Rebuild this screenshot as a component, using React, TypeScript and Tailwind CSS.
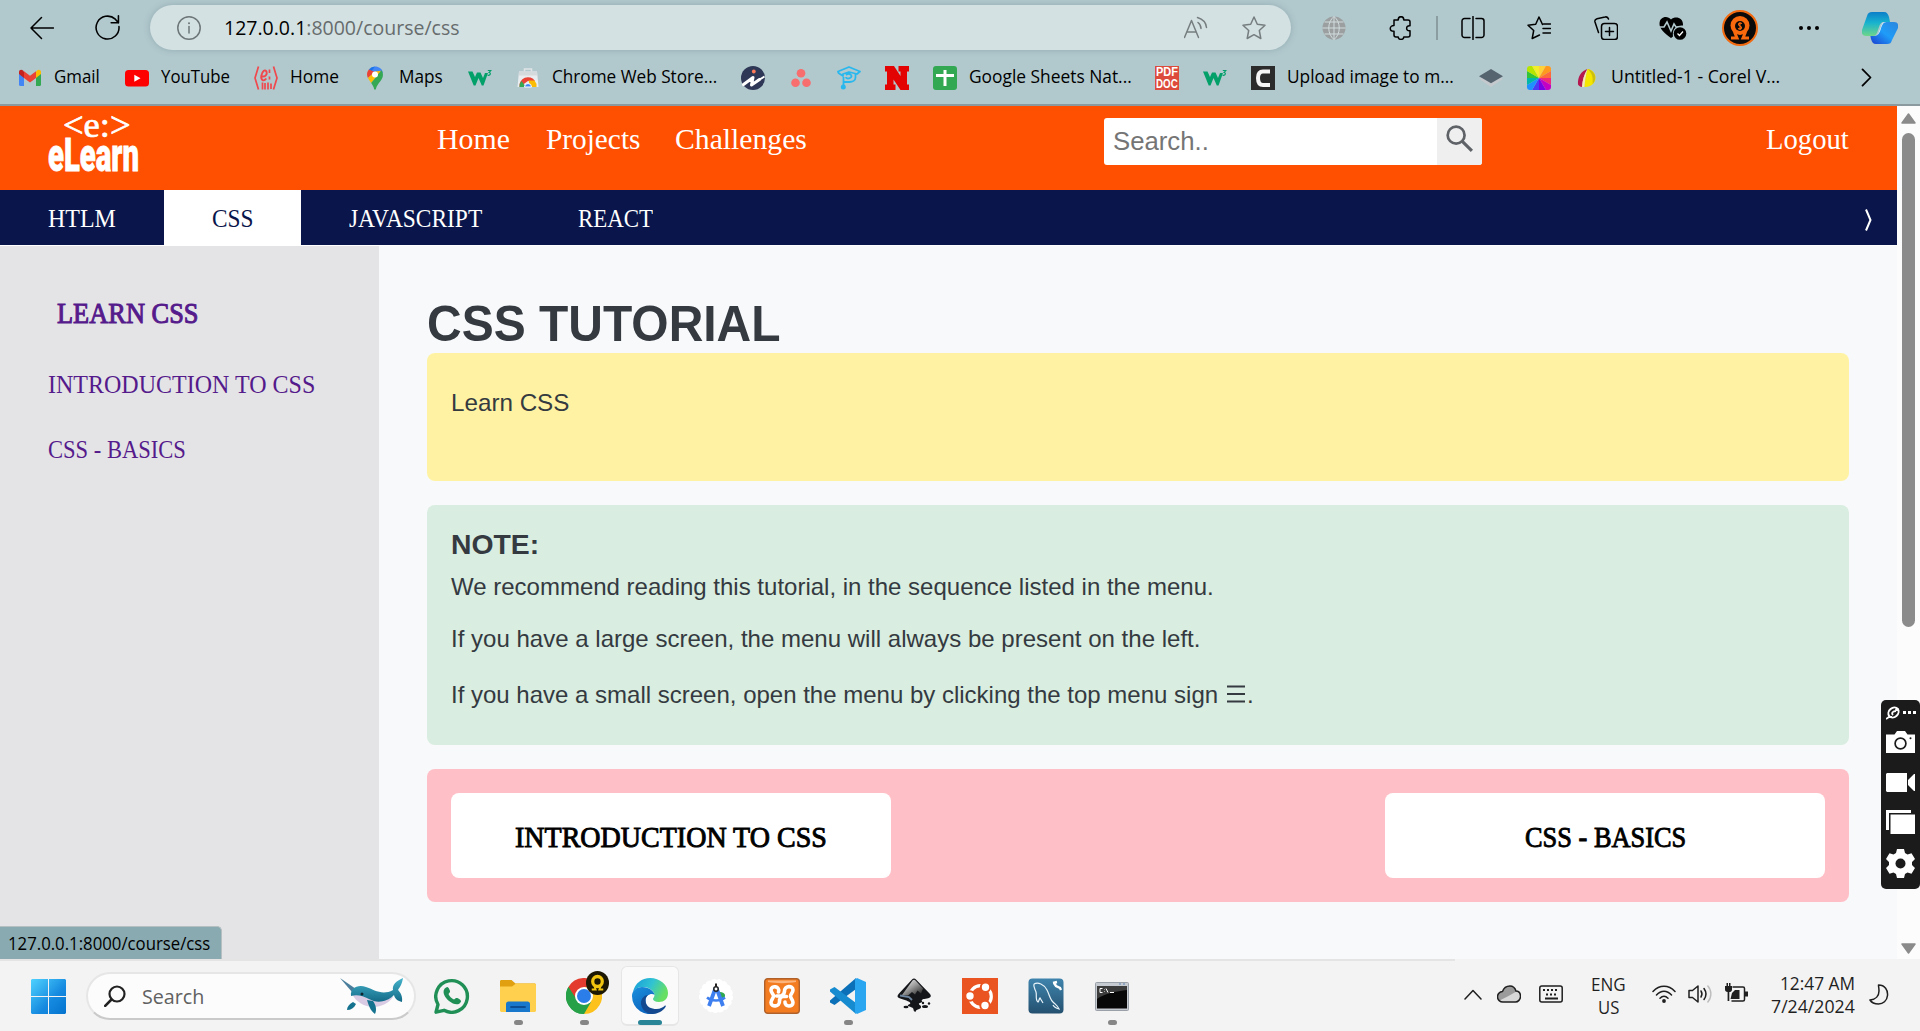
import React, { useLayoutEffect, useRef, type ReactNode } from "react";

/** Single line of text that is condensed or widened to occupy exactly `w` pixels. */
function Fit({ w, className = "", children }: { w: number; className?: string; children: ReactNode }) {
  const ref = useRef<HTMLSpanElement>(null);
  useLayoutEffect(() => {
    const el = ref.current;
    if (!el) return;
    el.style.transform = `scaleX(${w / el.offsetWidth})`;
  }, [w]);
  return (
    <span className={`block shrink-0 ${className}`} style={{ width: w }}>
      <span ref={ref} className="inline-block origin-left whitespace-nowrap">
        {children}
      </span>
    </span>
  );
}

type IconProps = { className?: string; children: ReactNode; box?: string };
function Svg({ className = "size-6", children, box = "0 0 24 24" }: IconProps) {
  return (
    <svg viewBox={box} preserveAspectRatio="none" className={`block shrink-0 ${className}`} fill="none">
      {children}
    </svg>
  );
}
const line = { stroke: "currentColor", strokeWidth: 1.5, strokeLinecap: "round", strokeLinejoin: "round" } as const;

/* ---------- Bookmark icons ---------- */
const Gmail = () => (
  <Svg>
    <path d="M1 6v12.500a1.500 1.500 0 0 0 1.500 1.500H6V9.500z" fill="#4285f4" />
    <path d="M18 9.500V20h3.500a1.500 1.500 0 0 0 1.500-1.500V6z" fill="#34a853" />
    <path d="M18 5.500V12l5-4V6c0-2-2.500-3-4-1.500z" fill="#fbbc04" />
    <path d="M6 5.500V12L1 8V6c0-2 2.500-3 4-1.500z" fill="#c5221f" />
    <path d="M6 12V5.200l6 4.600 6-4.600V12l-6 4.600z" fill="#ea4335" />
  </Svg>
);
const YouTube = () => (
  <Svg>
    <rect x="0" y="4" width="24" height="16.500" rx="3.500" fill="#f00" />
    <path d="M9.300 8.800v7l6.200-3.500z" fill="#fff" />
  </Svg>
);
const ELearnMark = () => (
  <Svg className="size-6 text-[#f0484c]">
    <path d="M4.500.5 1 12l3.500 11.500M19.500.5 23 12l-3.500 11.500" stroke="currentColor" strokeWidth="1.700" />
    <path d="M7.500 10.500c4 .5 6-2 5-5-1.500-2.500-4.500-.5-5.200 4.500-.6 4 2.200 6 5 2.500" stroke="currentColor" strokeWidth="1.900" />
    <path d="M8.500 16.500v7M11 17v6.500M15.500 3.500v3.500M15.500 10.500v3M14 16.500v7M17 17.500v5.500" stroke="currentColor" strokeWidth="1.700" />
  </Svg>
);
const Maps = () => (
  <Svg>
    <path d="M12 .5a8 8 0 0 0-6.200 2.900L12 8.500z" fill="#1a73e8" />
    <path d="M12 .5c4 0 7.200 2.300 7.900 6.200L12 12 8 6z" fill="#4285f4" />
    <path d="M5.800 3.400A8.500 8.500 0 0 0 4.900 12L12 6z" fill="#ea4335" />
    <path d="M5 12c.8 1.900 2 3.300 3.200 5L18.300 4.700 12 5.500z" fill="#fbbc04" />
    <path d="M18.500 4.300c2.500 4 1.500 7.500-1 10.700-2.300 3-3.900 4.700-4.600 8-.3 1-1.500 1-1.800 0-.5-2.300-1.500-4-2.900-6z" fill="#34a853" />
    <circle cx="12" cy="8.600" r="3" fill="#fff" />
  </Svg>
);
const W3 = () => (
  <Svg className="size-6 text-[#04a06a]">
    <path d="M0 5.500h4.500L7 11l2-4.500h3.500L15 12l2-5h3l-4.500 12.500h-1.700L10.500 12 7.500 19.500H5.700z" fill="currentColor" />
    <path d="M19.800 4.500h3l-1.600 2c1.600 0 1.800 3.300-1.600 2.800" stroke="currentColor" strokeWidth="1.200" />
  </Svg>
);
const WebStore = () => (
  <Svg>
    <path d="M8.500 5.500V3h7v2.500" stroke="#dfe3e6" strokeWidth="1.600" />
    <path d="M3 5.500h18L22.500 21h-21z" fill="#e9edef" />
    <path d="M3 5.500h18l.4 4H2.600z" fill="#d5dadd" />
    <path d="M3.500 21a8.500 8.500 0 0 1 15.500-6H12z" fill="#ea4335" />
    <path d="M3.500 21a8 8 0 0 1 2-6l4.500 6z" fill="#34a853" />
    <path d="M20.500 21a8 8 0 0 0-2-6.500h-6l1.700 6.500z" fill="#fbbc04" />
    <path d="M8.500 21a3.500 3.500 0 0 1 7 0z" fill="#4285f4" stroke="#fff" strokeWidth="1" />
  </Svg>
);
const InfinityI = () => (
  <Svg>
    <circle cx="12" cy="12" r="12" fill="#2e3856" />
    <path d="m2.500 18.500 9.500-7-1.500 7.500 8-5.500" stroke="#fff" strokeWidth="3" strokeLinejoin="round" strokeLinecap="round" />
    <path d="m17 14.500 6.500-4" stroke="#fff" strokeWidth="2" />
    <circle cx="12.800" cy="5.500" r="1.900" fill="#ff7a59" />
  </Svg>
);
const Asana = () => (
  <Svg className="size-6 text-[#f86d6d]">
    <circle cx="12" cy="7.200" r="4.300" fill="currentColor" />
    <circle cx="6.500" cy="16.800" r="4.300" fill="currentColor" />
    <circle cx="17.500" cy="16.800" r="4.300" fill="currentColor" />
  </Svg>
);
const GraduateP = () => (
  <Svg className="size-6 text-[#29b8ee]">
    <path d="M1 5.500 12 1l11 4.500-3 2.500-8-2-6 2v2L1.500 7zM6.500 22V11M7 16h5.500c3 0 6-1.500 6-4.500V8M9 9c3-3 8 1 4 3-2 1-4 .5-4-1" stroke="currentColor" strokeWidth="1.800" strokeLinejoin="round" />
    <circle cx="6.300" cy="21" r="2.500" fill="currentColor" />
  </Svg>
);
const BigN = () => (
  <Svg>
    <path d="M0 0h9l6.500 10V5.500h-2V0H24v5.500h-2v13h2V24h-8.500L8.500 13.500v5h2V24H0v-5.500h2v-13H0z" fill="#e40303" />
  </Svg>
);
const Sheets = () => (
  <Svg>
    <rect width="24" height="24" rx="3" fill="#32a852" />
    <path d="M12 4v16M3 9.500h18" stroke="#fff" strokeWidth="3" />
  </Svg>
);
const PdfDoc = () => (
  <span className="flex size-6 flex-col items-center justify-center bg-[#dd4b3c] font-['Liberation_Sans'] text-[12px] leading-[12px] font-bold text-white">
    <Fit w={22}>PDF</Fit>
    <Fit w={22}>DOC</Fit>
  </span>
);
const BigC = () => (
  <Svg>
    <rect width="24" height="24" fill="#2b2b2b" />
    <path d="M19 5.500h-7c-3.500 0-5 2-5 6.500s1.500 7 5 7h7" stroke="#f5f5f5" strokeWidth="4" />
  </Svg>
);
const Layers = () => (
  <Svg>
    <path d="m12 7 12 6-12 8-12-8z" fill="#c3c9cc" />
    <path d="m12 3 12 7.200-12 7-12-7z" fill="#566470" />
  </Svg>
);
const WHEEL = ["#ffd23a", "#ff9a1f", "#ff6a3a", "#ef2a7a", "#c400c4", "#7a00e6", "#4a3cf5", "#1e90ff", "#00b7a8", "#35c435", "#b6e600", "#f3ee2c"];
const ColorWheel = () => (
  <span className="block size-6 overflow-hidden rounded-[3px]">
    <Svg>
      {WHEEL.map((c, i) => {
        const a = ((i * 30 - 90) * Math.PI) / 180;
        const b = (((i + 1) * 30 - 90) * Math.PI) / 180;
        return <path key={c} fill={c} d={`M12 12L${12 + 24 * Math.cos(a)} ${12 + 24 * Math.sin(a)}L${12 + 24 * Math.cos(b)} ${12 + 24 * Math.sin(b)}z`} />;
      })}
    </Svg>
  </span>
);
const Corel = () => (
  <Svg>
    <path d="M12.500 3C6 5 2.500 11 3 18.500 4 20 5.500 21 7 21c.5-7 2-12.500 5.500-18z" fill="#b5174f" />
    <path d="M12.500 3C9 8.500 7.500 14 7 21h2.500c.5-7 1.500-12 3-18z" fill="#f7e9b0" />
    <path d="M12.500 3c-1.500 6-2.500 11-3 18 6 .5 10.500-3.500 11-8.500C21 8 17.500 3.500 12.500 3z" fill="#f5e600" />
    <path d="M12.500 3c4 3 6 8 5 15 4.500-4 4-13-5-15z" fill="#cdbf10" />
  </Svg>
);

type Bookmark = { icon: ReactNode; label?: string; w?: number; slot: string };
const bookmarks: Bookmark[] = [
  { icon: <Gmail />, label: "Gmail", w: 46, slot: "w-[107px]" },
  { icon: <YouTube />, label: "YouTube", w: 69, slot: "w-[129px]" },
  { icon: <ELearnMark />, label: "Home", w: 49, slot: "w-[109px]" },
  { icon: <Maps />, label: "Maps", w: 44, slot: "w-[105px]" },
  { icon: <W3 />, slot: "w-[48px]" },
  { icon: <WebStore />, label: "Chrome Web Store...", w: 165, slot: "w-[225px]" },
  { icon: <InfinityI />, slot: "w-[48px]" },
  { icon: <Asana />, slot: "w-[48px]" },
  { icon: <GraduateP />, slot: "w-[48px]" },
  { icon: <BigN />, slot: "w-[48px]" },
  { icon: <Sheets />, label: "Google Sheets Nat...", w: 163, slot: "w-[222px]" },
  { icon: <PdfDoc />, slot: "w-[48px]" },
  { icon: <W3 />, slot: "w-[48px]" },
  { icon: <BigC />, label: "Upload image to m...", w: 167, slot: "w-[228px]" },
  { icon: <Layers />, slot: "w-[48px]" },
  { icon: <ColorWheel />, slot: "w-[48px]" },
  { icon: <Corel />, label: "Untitled-1 - Corel V...", w: 169, slot: "w-[286px]" },
];

/* ---------- Browser chrome ---------- */
function BrowserBar() {
  return (
    <header className="h-[106px] shrink-0 border-b-2 border-[#8a9a9f] bg-[#b1c8cd] font-['Open_Sans','Noto_Sans',sans-serif] text-black">
      <div className="flex h-[55px] items-center pl-[30px]">
        <div className="w-[65px]">
          <Svg>
            <path d="M23.500 12H1M11.500 1.500 1 12l10.500 10.500" {...line} />
          </Svg>
        </div>
        <div className="w-[55px]">
          <Svg className="size-[25px]">
            <path d="M23 11a11 11 0 1 1-3.500-7L22.500 7.500M22.500.8v6.700H15.500" {...line} strokeWidth={1.500} />
          </Svg>
        </div>
        <div className="flex h-[45px] w-[1141px] items-center rounded-full bg-[#d3e1e2] pr-[25px] pl-[27px] shadow-[0_0_6px_rgba(90,120,125,0.35)]">
          <Svg className="size-6 text-[#6d7678]">
            <circle cx="12" cy="12" r="11.200" {...line} />
            <path d="M12 10.500V17" {...line} />
            <circle cx="12" cy="7.200" r="1" fill="currentColor" />
          </Svg>
          <div className="ml-[23px] text-[20px] leading-6">
            <Fit w={236}>
              127.0.0.1<span className="text-[#676c6d]">:8000/course/css</span>
            </Fit>
          </div>
          <div className="ml-auto flex items-center gap-[34px] text-[#767d7f]">
            <Svg>
              <path d="m.5 21.500 7-17 7 17M3 16h9M14 6.500c2 1.500 3 3.500 3 6M13.500 1.500c5 1.500 8.500 5 9 10" {...line} />
            </Svg>
            <Svg>
              <path d="m12 1 3.300 7.200 7.700 1-5.700 5.300 1.500 8L12 18.700 5.200 22.500l1.500-8L1 9.200l7.700-1z" {...line} />
            </Svg>
          </div>
        </div>
        <div className="ml-[31px] w-[67px]">
          <Svg>
            <circle cx="12" cy="12" r="11.500" fill="#9b9fa0" />
            <path d="M12 .5v23M.5 12h23M2.500 6h19M2.500 18h19M12 .5C5 6 5 18 12 23.500M12 .5c7 5.500 7 17.500 0 23" stroke="#d2dcde" strokeWidth="1" />
          </Svg>
        </div>
        <div className="w-[47px]">
          <Svg>
            <path d="M5 4h4.200C9.200-.5 14.800-.5 14.800 4H19a2 2 0 0 1 2 2v3.800c-4.500-.8-4.500 5.800 0 5V19a2 2 0 0 1-2 2h-4.200c0 3.200-5.600 3.200-5.600 0H7a2 2 0 0 1-2-2v-3.800c-5 0-5-5.600 0-5.600z" {...line} />
          </Svg>
        </div>
        <div className="h-6 w-[25px] border-l-2 border-[#8b9da1]" />
        <div className="w-[66px]">
          <Svg>
            <path d="M9 2.500H3.500a2.500 2.500 0 0 0-2.500 2.500v14a2.500 2.500 0 0 0 2.500 2.500H9M15 2.500h5.500A2.500 2.500 0 0 1 23 5v14a2.500 2.500 0 0 1-2.500 2.500H15M12 .5v23" {...line} />
          </Svg>
        </div>
        <div className="w-[67px]">
          <Svg>
            <path d="M15.500 8.500 12 1 8.700 8.200 1 9.200l5.700 5.300-1.500 8L12.500 19M16 12.500h7.500M16.500 8h7M16 17h7.500" {...line} />
          </Svg>
        </div>
        <div className="w-[65px]">
          <Svg>
            <rect x="7.500" y="7.500" width="16" height="16" rx="3" {...line} />
            <path d="M15.500 11.500v8M11.500 15.500h8M4.500 16.500 1 6c-.5-1.700.3-2.800 2-3.300L11 1c2-.5 3 .3 3.500 2" {...line} />
          </Svg>
        </div>
        <div className="w-[63px]">
          <Svg className="h-6 w-[28px]" box="0 0 28 24">
            <path d="M12 3.500C9-.5.500 0 .5 8c0 5 5 9 11.500 14l2-1.500C13 13 17 9 24 9.500 24.500 1 16 0 12 3.500z" fill="#000" />
            <path d="M0 11h5l3-5 4 9 3-7 2 3h6" stroke="#b1c8cd" strokeWidth="1.600" />
            <circle cx="21" cy="17.500" r="6.300" fill="#000" />
            <path d="m18.500 17.500 2 2 3.500-4" stroke="#fff" strokeWidth="1.300" />
          </Svg>
        </div>
        <div className="w-[77px]">
          <Svg className="size-9" box="0 0 36 36">
            <circle cx="18" cy="18" r="17" fill="#0a0a0a" stroke="#f26a10" strokeWidth="2" />
            <circle cx="18" cy="15.500" r="9.500" fill="#f8690d" />
            <path d="M9 28h6l-2.500-6M27 28h-6l2.500-6" stroke="#f8690d" strokeWidth="3" />
            <circle cx="18" cy="16" r="5" fill="#0a0a0a" />
            <path d="M20 13.500c-3-1.500-5 1-2 2.500s1 4-2 2.500M18 12v8" stroke="#f8690d" strokeWidth="1.100" />
          </Svg>
        </div>
        <div className="flex w-[61px] gap-[4px]">
          <i className="size-[4px] rounded-full bg-black" />
          <i className="size-[4px] rounded-full bg-black" />
          <i className="size-[4px] rounded-full bg-black" />
        </div>
        <Svg className="ml-[2px] h-[34px] w-9" box="0 0 36 34">
          <defs>
            <linearGradient id="cpA" x1="0" y1="0" x2="0" y2="1">
              <stop offset="0" stopColor="#0c7fc9" />
              <stop offset=".45" stopColor="#18b3cf" />
              <stop offset="1" stopColor="#6fd58a" />
            </linearGradient>
            <linearGradient id="cpB" x1="1" y1="0" x2="0" y2="1">
              <stop offset="0" stopColor="#2b86dd" />
              <stop offset=".5" stopColor="#1f9cf8" />
              <stop offset="1" stopColor="#1b3fd0" />
            </linearGradient>
          </defs>
          <path d="M10 1h12c3 0 4 2 5 5l1 5h-6c-3 0-4 2-5 5l-2 6c-1 2-2 3-4 3H4c-3 0-5-2-4-6L5 5c1-3 2-4 5-4z" fill="url(#cpA)" />
          <path d="M25 33H14c-3 0-4-2-5-5l-.6-3H12c3 0 4-2 5-5l2-5c1-3 2-4 5-4h8c3 0 5 2 4 6l-6 12c-1 3-2 4-5 4z" fill="url(#cpB)" />
          <path d="M10.500 25h1.500c3 0 4-2 5-5l2-5c.8-2.500 1.800-4 4-4h1.500c-4 0-5 5-6 8s-3 6-6 6z" fill="#dfeef2" />
        </Svg>
      </div>
      <nav className="flex h-[45px] items-center pl-[18px] text-[18px] leading-6">
        {bookmarks.map((b, i) => (
          <div key={i} className={`flex shrink-0 items-center gap-3 ${b.slot}`}>
            {b.icon}
            {b.label && <Fit w={b.w ?? 60} className="-mt-[3px]">{b.label}</Fit>}
          </div>
        ))}
        <Svg className="h-[19px] w-[11px]" box="0 0 11 20">
          <path d="m1.500 1.500 8 8.500-8 8.500" {...line} strokeWidth={1.800} />
        </Svg>
      </nav>
    </header>
  );
}

/* ---------- Site ---------- */
const serif = "font-['Liberation_Serif',serif]";

function SiteHeader() {
  return (
    <div className={`flex h-[84px] shrink-0 bg-[#ff4f00] text-white ${serif}`}>
      <div className="w-[437px] pt-[8px] pl-12">
        <div className="pl-[15px] text-[36px] leading-[23px]">
          <Fit w={68} className="[-webkit-text-stroke:0.7px]">&lt;e:&gt;</Fit>
        </div>
        <div className="font-['Roboto','Liberation_Sans',sans-serif] text-[46px] leading-[36px] font-black [-webkit-text-stroke:0.8px]">
          <Fit w={91}>eLearn</Fit>
        </div>
      </div>
      <div className="flex pt-[15px] text-[29px] leading-[36px]">
        <div className="w-[109px]"><Fit w={73}>Home</Fit></div>
        <div className="w-[129px]"><Fit w={94}>Projects</Fit></div>
        <div className="w-[429px]"><Fit w={132}>Challenges</Fit></div>
      </div>
      <div className="mt-3 flex h-[47px] w-[378px] overflow-hidden rounded-[3px] bg-white font-['Liberation_Sans',sans-serif]">
        <div className="flex w-[333px] items-center pb-px pl-[9px] text-[26px] leading-8 text-[#757575]">
          <Fit w={96}>Search..</Fit>
        </div>
        <div className="flex-1 bg-[#efefef] pt-[7px] pl-[9px]">
          <Svg className="size-[27px] text-[#5f6368]">
            <circle cx="9" cy="9" r="7.500" stroke="currentColor" strokeWidth="2.400" />
            <path d="m14.500 14.500 8.500 8.500" stroke="currentColor" strokeWidth="2.800" />
          </Svg>
        </div>
      </div>
      <div className="ml-auto pt-[15px] pr-12 text-[29px] leading-[36px]">
        <Fit w={83}>Logout</Fit>
      </div>
    </div>
  );
}

function CourseTabs() {
  return (
    <div className={`flex h-[56px] shrink-0 border-b border-white bg-[#0a164b] text-[25px] leading-[30px] text-white ${serif}`}>
      <div className="w-[164px] pt-[14px] pl-12"><Fit w={68}>HTLM</Fit></div>
      <div className="w-[137px] bg-white pt-[14px] pl-12 text-[#0a164b]"><Fit w={41}>CSS</Fit></div>
      <div className="w-[229px] pt-[14px] pl-12"><Fit w={133}>JAVASCRIPT</Fit></div>
      <div className="w-[170px] pt-[14px] pl-12"><Fit w={75}>REACT</Fit></div>
      <Svg className="mt-[19px] mr-[25px] ml-auto h-[22px] w-[7px]" box="0 0 7 22">
        <path d="m1 .5 4.500 10.500L1 21.500" stroke="currentColor" strokeWidth="2" />
      </Svg>
    </div>
  );
}

function Sidebar() {
  return (
    <aside className={`w-[379px] shrink-0 bg-[#e4e4e6] pl-12 text-[25px] leading-[30px] text-[#551a8b] ${serif}`}>
      <div className="pt-[49px] pl-[9px] text-[29px] leading-[36px] [-webkit-text-stroke:1px]">
        <Fit w={142}>LEARN CSS</Fit>
      </div>
      <div className="pt-[39px]"><Fit w={267}>INTRODUCTION TO CSS</Fit></div>
      <div className="pt-[35px]"><Fit w={138}>CSS - BASICS</Fit></div>
    </aside>
  );
}

function NextButton({ children }: { children: ReactNode }) {
  return (
    <div className="flex h-[85px] w-[440px] justify-center rounded-lg bg-white pt-[26px] text-[29px] leading-[36px] text-black [-webkit-text-stroke:0.9px]">
      {children}
    </div>
  );
}

function Lesson() {
  return (
    <main className="flex-1 bg-[#f8f9fb] px-12 font-['Liberation_Sans',sans-serif] text-[24px] leading-[30px] text-[#343a40]">
      <h1 className="pt-[50px] text-[50px] leading-[57px] font-bold"><Fit w={354}>CSS TUTORIAL</Fit></h1>
      <section className="h-[128px] rounded-lg bg-[#fff3a3] pt-[35px] pl-6">
        <Fit w={118}>Learn CSS</Fit>
      </section>
      <section className="mt-6 h-[240px] rounded-lg bg-[#d9ede0] pt-[23px] pl-6">
        <h2 className="text-[28px] leading-[34px] font-bold"><Fit w={88}>NOTE:</Fit></h2>
        <p className="pt-[10px]"><Fit w={763}>We recommend reading this tutorial, in the sequence listed in the menu.</Fit></p>
        <p className="pt-[22px]"><Fit w={749}>If you have a large screen, the menu will always be present on the left.</Fit></p>
        <p className="flex pt-[26px]">
          <Fit w={767}>If you have a small screen, open the menu by clicking the top menu sign</Fit>
          <Svg className="mt-[5px] ml-[9px] h-[18px] w-[18px]" box="0 0 18 18">
            <path d="M0 1.500h18M0 9h18M0 16.500h18" stroke="currentColor" strokeWidth="2" />
          </Svg>
          <span className="ml-[2px]">.</span>
        </p>
      </section>
      <section className={`mt-6 flex h-[133px] justify-between rounded-lg bg-[#ffbfc7] p-6 ${serif}`}>
        <NextButton><Fit w={312}>INTRODUCTION TO CSS</Fit></NextButton>
        <NextButton><Fit w={161}>CSS - BASICS</Fit></NextButton>
      </section>
    </main>
  );
}

function Scrollbar() {
  return (
    <div className="flex w-[23px] shrink-0 flex-col items-center bg-[#fcfcfc] pt-[7px] pb-[5px]">
      <Svg className="h-[11px] w-[15px]" box="0 0 15 11"><path d="M7.500 1 14 10H1z" fill="#8b8b8b" stroke="#8b8b8b" strokeWidth="1.500" strokeLinejoin="round" /></Svg>
      <div className="mt-[9px] h-[494px] w-[13px] rounded-full bg-[#8b8b8b]" />
      <Svg className="mt-auto h-[11px] w-[15px]" box="0 0 15 11"><path d="M7.500 10 14 1H1z" fill="#8b8b8b" stroke="#8b8b8b" strokeWidth="1.500" strokeLinejoin="round" /></Svg>
    </div>
  );
}

function Recorder() {
  return (
    <div className="absolute top-[700px] right-0 flex h-[189px] w-[39px] flex-col items-center rounded-[5px] bg-[#1b1b1b] text-white">
      <div className="mt-[5px] flex h-[15px] items-center gap-[3px]">
        <Svg className="size-[14px]" box="0 0 14 14">
          <ellipse cx="7.500" cy="6.500" rx="5.500" ry="4.500" transform="rotate(-40 7.500 6.500)" stroke="#fff" strokeWidth="2" />
          <path d="M10 5c-3 0-5 2-3 4M0 13l3-2h3" stroke="#fff" strokeWidth="1.800" />
          <circle cx="11" cy="3.500" r="1.800" fill="#fff" />
        </Svg>
        <i className="-mr-px size-[3px] bg-white" />
        <i className="-mr-px size-[3px] bg-white" />
        <i className="size-[3px] bg-white" />
      </div>
      <Svg className="mt-[11px] h-[22px] w-[29px]" box="0 0 29 22">
        <path d="M0 3.500h8.500L11 0h8l2.500 3.500H29V22H0z" fill="#fff" />
        <circle cx="14.500" cy="12.500" r="5.400" stroke="#1b1b1b" strokeWidth="1.700" />
        <circle cx="24.500" cy="7.300" r="1" fill="#1b1b1b" />
      </Svg>
      <Svg className="mt-[20px] h-[19px] w-[29px]" box="0 0 29 19">
        <path d="M1 0h20v19H1l-1-1V1zM22 7l6-6h1v17h-1l-6-6z" fill="#fff" />
      </Svg>
      <Svg className="mt-[18px] h-[24px] w-[29px]" box="0 0 29 24">
        <path d="M0 0h25v3H3v17H0z" fill="#fff" />
        <path d="M4.500 4.500H29V24H4.500z" fill="#fff" />
      </Svg>
      <Svg className="mt-[15px] size-[29px]" box="0 0 29 29">
        <path d="M11 0h7l1 4 2.500 1.500 4-1.300L29 10l-3 3v3l3 3-3.500 5.800-4-1.300L19 25l-1 4h-7l-1-4-2.500-1.500-4 1.300L0 19l3-3v-3l-3-3 3.500-5.800 4 1.300L10 4z" fill="#fff" />
        <circle cx="14.500" cy="14.500" r="5" fill="#1b1b1b" />
      </Svg>
    </div>
  );
}

/* ---------- Taskbar icons ---------- */
const Windows = () => (
  <Svg className="size-[35px]" box="0 0 35 35">
    <defs>
      <linearGradient id="win" gradientUnits="userSpaceOnUse" x1="0" y1="0" x2="35" y2="35">
        <stop offset="0" stopColor="#4fd2ff" /><stop offset=".6" stopColor="#1589df" /><stop offset="1" stopColor="#0473cf" />
      </linearGradient>
    </defs>
    <path d="M1 0h16v17H0V1zM18 0h16l1 1v16H18zM0 18h17v17H1l-1-1zM18 18h17v16l-1 1H18z" fill="url(#win)" />
  </Svg>
);
const Narwhal = () => (
  <Svg className="h-[36px] w-[64px]" box="0 0 64 36">
    <defs>
      <linearGradient id="nar" x1="0" y1="0" x2="0" y2="1"><stop offset="0" stopColor="#46b3cb" /><stop offset="1" stopColor="#136a87" /></linearGradient>
    </defs>
    <path d="m0 0 16 11-4 3z" fill="#4a7e9c" />
    <path d="M12 16c5 10 17 15 28 12 6-1.500 10-5 13-9L30 17z" fill="#d9cbe4" />
    <path d="M11 18c-1-8 7-12 15-9 8 2.500 16 9 27 3-1-5 3-9 10-12-1 6-3 9-5 12 2 2 5 6 4 12-4-1-7-3-8-7-8 8-18 8-25 4-6-3-12-5-18-3z" fill="url(#nar)" />
    <path d="M13 24c-4 2-6 5-6 8 4 0 7-2 9-6zM27 22c2 6 3 10 8 14 2-4 1-9-2-13z" fill="#16738f" />
    <circle cx="22" cy="16" r="1.500" fill="#10242e" />
  </Svg>
);
const WhatsApp = () => (
  <Svg className="size-9" box="0 0 36 36">
    <path d="M2 34.200 4 26.500A15.800 15.800 0 1 1 10 32.300z" stroke="#1f8f56" strokeWidth="3.400" strokeLinejoin="round" />
    <path d="M12 9.500c-5 3-1.500 10 3 13.500s10 5 12 .5c.5-1.500-3.500-4-5-3.500L20 21.500c-2.500-1-4.500-3-5.500-5.500l1.500-2c.5-1-1.500-5-2.500-5z" fill="#1f8f56" />
  </Svg>
);
const Folder = () => (
  <Svg className="size-9" box="0 0 36 36">
    <path d="M0 3.500C0 2.500.500 2 1.500 2h10l4 3.500H35l1 1V12H0z" fill="#e0a010" />
    <path d="M0 8.500h12l4-3h19l1 1V33l-1 1H1l-1-1z" fill="#ffd04d" />
    <path d="M6 34v-8c0-1.500 1-2.500 2.500-2.500h19c1.500 0 2.500 1 2.500 2.500v8z" fill="#1878cc" />
    <path d="M11 29h14" stroke="#0b4d93" strokeWidth="1.800" strokeLinecap="round" />
  </Svg>
);
const Chrome = () => (
  <div className="relative">
    <Svg className="size-9" box="0 0 36 36">
      <path d="M18 18 2.400 9A18 18 0 0 0 18 36l8-13z" fill="#26a148" />
      <path d="M18 18 18 36A18 18 0 0 0 33.600 9H18z" fill="#fcc21b" />
      <path d="M18 18 2.400 9a18 18 0 0 1 31.200 0H18z" fill="#e33b2e" />
      <path d="m2.400 9 8 13.500 5 2L18 9z" fill="#e33b2e" />
      <path d="M2.400 9A18 18 0 0 0 18 36l7-12-14-2z" fill="#26a148" />
      <circle cx="18" cy="18" r="9" fill="#fff" />
      <circle cx="18" cy="18" r="7" fill="#2b7de9" />
    </Svg>
    <Svg className="absolute -top-[7px] left-5 h-6 w-[23px]">
      <circle cx="12" cy="12" r="12" fill="#1c1803" />
      <circle cx="12" cy="10.500" r="5" stroke="#f1c40f" strokeWidth="3.400" />
      <path d="M6 18.500h4l-1-3M18 18.500h-4l1-3" stroke="#f1c40f" strokeWidth="2" />
    </Svg>
  </div>
);
const Edge = () => (
  <Svg className="size-9" box="0 0 36 36">
    <defs>
      <linearGradient id="edA" x1="0" y1="0" x2="1" y2=".4"><stop offset="0" stopColor="#169bdb" /><stop offset=".55" stopColor="#31c3d2" /><stop offset="1" stopColor="#66df62" /></linearGradient>
      <linearGradient id="edB" x1="0" y1="0" x2=".6" y2="1"><stop offset="0" stopColor="#1a8fdc" /><stop offset="1" stopColor="#0b62bd" /></linearGradient>
    </defs>
    <path d="M1 14C3 5 10 0 18 0c10 0 18 7 18 15 0 6-4 9-9 9-4 0-6-1.500-6-3 0-1 1.500-2 1.500-4C22 12 16 9 11 9c-5 0-8 2-10 5z" fill="url(#edA)" />
    <path d="M0 18c0-5 4-9 10-9 7 0 12 4 12.500 8-2-2-9-1-9 6 0 6 5 11 12 11.500A18 18 0 0 1 0 18z" fill="url(#edB)" />
    <path d="M13.500 22c0 7 6 9 11 9 4 0 7-2 8.500-3.500 1 0 1 .5.500 1.500C31 33 26 36 20 36c-8-1-11-7-11-11 0-5 4-8 7-8-1.500 1.500-2.500 3-2.500 5z" fill="#14488f" />
  </Svg>
);
const AndroidStudio = () => (
  <Svg className="size-9" box="0 0 36 36">
    <circle cx="18" cy="18" r="16.300" fill="#fff" stroke="#fff" strokeWidth="1.500" strokeDasharray="4 2" />
    <path d="M22 14c5 0 6.500 4 3.500 6.500L22 19z" fill="#2fa84f" />
    <path d="M17.500 10 11 28M18.500 10 25 28" stroke="#3e7ff0" strokeWidth="3.800" />
    <path d="M9 19.500c5 4 13 4 18 0" stroke="#3e7ff0" strokeWidth="2.600" />
    <path d="M18 5.500V9" stroke="#222" strokeWidth="2" />
    <circle cx="18" cy="11" r="2.200" fill="#fff" stroke="#222" strokeWidth="1.500" />
  </Svg>
);
const Xampp = () => (
  <Svg className="size-9" box="0 0 36 36">
    <rect x=".7" y=".7" width="34.600" height="34.600" rx="3" fill="#f47c20" stroke="#b0612a" strokeWidth="1.400" />
    <path d="M4 2.500h28v1.500c-8 1.500-20 1.500-28 0z" fill="#fbb57c" />
    <path d="M14.500 14c2-6-7.500-7-7.500-2 0 3 2.500 3.500 2.500 6S7 21.500 7 24.500c0 5 9 4.500 8.500-1.500 0-3 2-4.500 3.500-4.500h3.500M12.500 18h4c1.500 0 3.500-1.500 4-4.500C20 7.500 29 7 29 12c0 3-2.500 3.500-2.500 6s2.500 3.500 2.500 6.500c0 5-8.500 4.500-8-.5" stroke="#fff" strokeWidth="3.600" strokeLinejoin="round" strokeLinecap="round" />
  </Svg>
);
const VsCode = () => (
  <Svg className="size-9" box="0 0 36 36">
    <path d="M26 0v11L4.500 27 0 24.500v-2z" fill="#0b70b8" />
    <path d="M26 36V25L4.500 9 0 11.500v2z" fill="#168bd0" />
    <path d="M27 0l9 4v28l-9 4-2-1.500V1.500z" fill="#2aa5f0" />
  </Svg>
);
const Inkscape = () => (
  <Svg className="size-9" box="0 0 36 36">
    <defs><linearGradient id="ink" x1="0" y1="0" x2=".9" y2="1"><stop offset="0" stopColor="#fff" /><stop offset=".5" stopColor="#9a9a9a" /><stop offset="1" stopColor="#222" /></linearGradient></defs>
    <path d="M16 1.500c1.200-1.300 2.800-1.300 4 0L34 16c2 2.500 0 4-3 4.500-4 .5-6 1-5 2.500s-2 1.500-3 2.500 3 2 2 4-5 1.500-5.500 4.500c-3-1-1-3.500-3.500-4.500s-5-1.500-4-2.500 3-1 2-2.500c-2-2-8-3-11-4.500-2-1-2-2.500 0-4.500z" fill="#14161a" />
    <path d="M16.500 2.500c1-.9 2-.9 3 0L27 10.500l-2 5-3.500-3-2.500 4-3-2.500-4 3.500-6-.5z" fill="url(#ink)" />
    <path d="m4 17.500 9 1.500 3 3" stroke="#6f86a0" strokeWidth="1.800" />
    <ellipse cx="10" cy="29" rx="2.500" ry="1.300" fill="#14161a" /><ellipse cx="29" cy="28.500" rx="3" ry="1.600" fill="#14161a" /><circle cx="33" cy="25.500" r="1.200" fill="#14161a" /><circle cx="27" cy="25" r="1.200" fill="#14161a" />
  </Svg>
);
const Ubuntu = () => (
  <Svg className="size-9" box="0 0 36 36">
    <rect width="36" height="36" fill="#e95420" />
    <circle cx="18.500" cy="18.500" r="10.800" stroke="#fff" strokeWidth="3.200" />
    <g fill="#fff" stroke="#e95420" strokeWidth="2"><circle cx="8" cy="18" r="4.700" /><circle cx="23.500" cy="9.300" r="4.700" /><circle cx="23" cy="27.500" r="4.700" /></g>
  </Svg>
);
const MySql = () => (
  <Svg className="size-9" box="0 0 36 36">
    <defs><linearGradient id="sql" x1="0" y1="0" x2="0" y2="1"><stop offset="0" stopColor="#3f84ad" /><stop offset="1" stopColor="#24506f" /></linearGradient></defs>
    <rect x=".5" y=".5" width="35" height="35" rx="4" fill="url(#sql)" />
    <path d="M6 6c4-2 10 0 13 6s3 10 7 13c2 2 4 3 5 6-3-1-5-2-6-4M6 6c-1 3 1 5 2 8s-1 8 2 10c1-1 1-3 2-4l3 5" stroke="#e8f3f9" strokeWidth="1.200" />
    <path d="m26 5 2 3 4 2 1 2M29 4l-4 1" stroke="#fff" strokeWidth="2.400" />
  </Svg>
);
const Terminal = () => (
  <Svg className="h-[29px] w-[34px]" box="0 0 34 29">
    <rect x=".5" y=".5" width="33" height="28" rx="1" fill="#c6cbd2" stroke="#9aa0a8" />
    <rect x="2" y="4" width="30" height="22.500" fill="#080808" />
    <path d="M2 4h30v4C22 9 8 12 2 17z" fill="#3c3c3c" />
    <path d="M24 2h2M28 2h2" stroke="#5d82b3" />
    <path d="M7.500 6.500H5v4h2.500M9.500 7v.5M9.500 9.500v.5M11 6.500l2 4M15 10.500h4" stroke="#fff" strokeWidth="1" />
  </Svg>
);

const apps: { icon: ReactNode; mark?: "dot" | "active" }[] = [
  { icon: <WhatsApp /> },
  { icon: <Folder />, mark: "dot" },
  { icon: <Chrome />, mark: "dot" },
  { icon: <Edge />, mark: "active" },
  { icon: <AndroidStudio /> },
  { icon: <Xampp /> },
  { icon: <VsCode />, mark: "dot" },
  { icon: <Inkscape /> },
  { icon: <Ubuntu /> },
  { icon: <MySql /> },
  { icon: <Terminal />, mark: "dot" },
];

function Taskbar() {
  return (
    <footer className="flex h-[72px] shrink-0 bg-[#f3f3f3] font-['Open_Sans','Noto_Sans',sans-serif] text-[#1f1f1f]">
      <div className="flex w-[1455px] border-t-2 border-[#e4e4e4]">
        <div className="w-[86px] pt-[18px] pl-[31px]"><Windows /></div>
        <div className="mt-[11px] flex h-[48px] w-[330px] items-center rounded-full border-2 border-[#e6e6e6] border-b-[#cacaca] bg-[#fcfcfc] pr-[10px] pl-4">
          <Svg className="size-[22px]" box="0 0 22 22">
            <circle cx="13" cy="9" r="7.500" stroke="#222" strokeWidth="2.200" />
            <path d="m7.500 14.500-6.300 6.300" stroke="#222" strokeWidth="2.600" strokeLinecap="round" />
          </Svg>
          <div className="ml-4 pt-px text-[20px] leading-6 text-[#616161]"><Fit w={62}>Search</Fit></div>
          <div className="ml-auto"><Narwhal /></div>
        </div>
        <div className="ml-[3px] flex pt-[5px]">
          {apps.map((a, i) => (
            <div key={i} className="flex w-[66px] justify-center">
              <div className={`flex h-[60px] w-[58px] flex-col items-center rounded-md pt-3 ${a.mark === "active" ? "border border-b-2 border-[#e6e6e6] bg-[#fafafa] pt-[11px]" : ""}`}>
                <div className="flex h-9 items-center">{a.icon}</div>
                {a.mark === "dot" && <i className="mt-[6px] h-[5px] w-[9px] rounded-full bg-[#868686]" />}
                {a.mark === "active" && <i className="mt-[6px] h-[5px] w-6 shrink-0 rounded-full bg-[#2a8597]" />}
              </div>
            </div>
          ))}
        </div>
      </div>
      <div className="flex flex-1 items-start pl-[9px] text-[17.500px] leading-[23px]">
        <Svg className="mt-[30px] h-[11px] w-[18px]" box="0 0 18 11"><path d="m1 10 8-8.500L17 10" {...line} /></Svg>
        <Svg className="mt-[26px] ml-[15px] h-[18px] w-[24px]" box="0 0 24 18">
          <path d="M6 17a5 5 0 0 1-.5-10.500C7 2 10 1 13 1s5 2 6 5c3 0 4.500 2.500 4.500 5.500S21 17 18.500 17z" fill="#9b9b9b" />
          <path d="m2.500 15.500 9-4.500 7-4c3 0 5 2 5 4.500 0 3.500-2.500 5.500-5 5.500H6z" fill="#d8d8d8" />
          <path d="M6 17a5 5 0 0 1-.5-10.500C7 2 10 1 13 1s5 2 6 5c3 0 4.500 2.500 4.500 5.500S21 17 18.500 17z" {...line} />
        </Svg>
        <Svg className="mt-[26px] ml-[18px] h-[18px] w-[24px]" box="0 0 24 18">
          <rect x=".8" y="1" width="22.400" height="16" rx="2" {...line} />
          <path d="M4 5h2M8 5h2M12 5h2M16 5h2M7 9.500h2M11 9.500h2M15 9.500h2M6 13.500h13" stroke="currentColor" strokeWidth="1.800" />
        </Svg>
        <div className="mt-[14px] ml-[27px] flex w-[36px] flex-col items-center">
          <Fit w={35}>ENG</Fit>
          <Fit w={21}>US</Fit>
        </div>
        <Svg className="mt-[26px] ml-[26px] h-[18px] w-[24px]" box="0 0 24 18">
          <path d="M1 6.500c6.500-7 15.500-7 22 0M4.500 10c4.500-5 10.500-5 15 0M8 13.200c2.500-2.600 5.500-2.600 8 0" {...line} />
          <circle cx="12" cy="16" r="1.900" fill="currentColor" />
        </Svg>
        <Svg className="mt-[25px] ml-[12px] h-[20px] w-[24px]" box="0 0 24 20">
          <path d="M1 6.500h3.500L10 2v16l-5.500-4.500H1zM13 7c1.300 2 1.300 4 0 6M16 4.500c2.500 3.500 2.500 7.500 0 11" {...line} />
          <path d="M19.500 1.500c4.500 5 4.500 12 0 17" stroke="#bdbdbd" strokeWidth="1.400" />
        </Svg>
        <Svg className="mt-[24px] ml-[12px] h-[20px] w-[24px]" box="0 0 24 20">
          <path d="M9 4h10a1.500 1.500 0 0 1 1.500 1.500v11A1.500 1.500 0 0 1 19 18H8" {...line} />
          <path d="M1 3h1.500V0h1.500v3h1V0h1.500v3H8v3.500C8 8.500 6.500 9 5.300 9v9H3.600V9C2 9 1 8 1 6.500zM21 8.500h3v5h-3zM8 10l3-3h4.500v9H6.500z" fill="currentColor" />
        </Svg>
        <div className="mt-[13px] ml-[21px] flex w-[86px] flex-col items-end">
          <Fit w={75}>12:47 AM</Fit>
          <Fit w={84}>7/24/2024</Fit>
        </div>
        <Svg className="mt-[25px] ml-[14px] h-[21px] w-[20px]" box="0 0 20 21">
          <path d="M9.500 1C16 1 19 6 18.500 11.500 18 17 14 20 9.500 20c-4 0-7-1.500-8.500-4 6-.5 9-4.500 9-9 0-2.500-.5-4.500-.5-6z" {...line} />
        </Svg>
      </div>
    </footer>
  );
}

export default function App() {
  return (
    <div className="relative flex h-[1031px] w-[1920px] flex-col overflow-hidden">
      <BrowserBar />
      <div className="relative flex min-h-0 flex-1">
        <div className="flex min-w-0 flex-1 flex-col">
          <SiteHeader />
          <CourseTabs />
          <div className="flex min-h-0 flex-1">
            <Sidebar />
            <Lesson />
          </div>
        </div>
        <Scrollbar />
        <div className="absolute bottom-0 left-0 flex h-[33px] w-[222px] items-center rounded-tr-[5px] border-t border-r border-[#b5bfc2] bg-[#88aab0] pl-2 font-['Open_Sans','Noto_Sans',sans-serif] text-[17.500px] leading-6 text-black">
          <Fit w={202}>127.0.0.1:8000/course/css</Fit>
        </div>
      </div>
      <Taskbar />
      <Recorder />
    </div>
  );
}
